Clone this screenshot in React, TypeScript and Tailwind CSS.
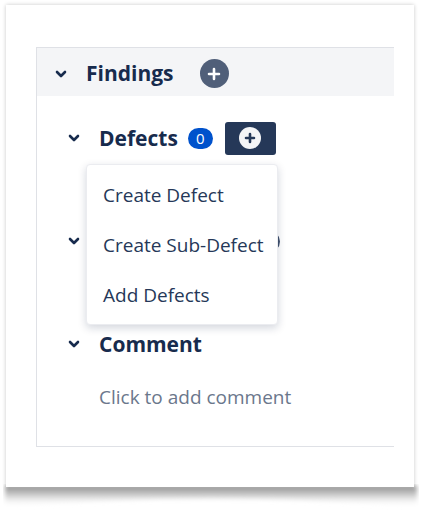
import type { ReactNode } from "react";

const font = { fontFamily: '"Open Sans", "Noto Sans", sans-serif' };

function Chevron() {
  return (
    <svg width="12" height="8" viewBox="0 0 12 8" className="shrink-0">
      <path d="M2 2l4 4 4-4" fill="none" stroke="#172b4d" strokeWidth="2.6" strokeLinecap="round" strokeLinejoin="round" />
    </svg>
  );
}

function Plus({ color, size }: { color: string; size: number }) {
  const a = size / 2;
  return (
    <svg width={size} height={size} viewBox={`0 0 ${size} ${size}`}>
      <path d={`M${a} ${a * 0.5}v${a}M${a * 0.5} ${a}h${a}`} stroke={color} strokeWidth="2.6" strokeLinecap="round" />
    </svg>
  );
}

function Row({ children, className = "" }: { children: ReactNode; className?: string }) {
  return <div className={`flex items-center h-[34px] pl-[31px] ${className}`}>{children}</div>;
}

export default function App() {
  return (
    <div className="w-[428px] h-[516px] bg-white relative overflow-hidden" style={font}>
      {/* page curl shadow */}
      <svg className="absolute left-[3px] top-[484px]" width="416" height="26" viewBox="0 0 416 26">
        <defs>
          <linearGradient id="curl" x1="0" y1="0" x2="0" y2="1">
            <stop offset="0" stopColor="#909090" />
            <stop offset="0.4" stopColor="#c8c8c8" />
            <stop offset="1" stopColor="#ffffff" stopOpacity="0" />
          </linearGradient>
          <filter id="blur">
            <feGaussianBlur stdDeviation="2" />
          </filter>
        </defs>
        <path d="M2 2H414V23Q208 6 2 23Z" fill="url(#curl)" filter="url(#blur)" />
      </svg>

      <div className="absolute left-[6px] top-[5px] w-[408px] h-[482px] bg-white shadow-[0_0_4px_rgba(0,0,0,0.22)] pl-[30px] pt-[42px]">
        <div className="relative w-[358px] h-[400px] border-l border-t border-b border-[#dfe1e6] bg-white">
          {/* Findings header */}
          <div className="flex items-center h-[48px] bg-[#f4f5f7] pl-[18px] pt-[3px]">
            <Chevron />
            <span className="ml-[19px] text-[21px] font-bold text-[#172b4d] leading-none">Findings</span>
            <span className="ml-[26px] flex items-center justify-center size-[29px] rounded-full bg-[#505f79]">
              <Plus color="#ffffff" size={20} />
            </span>
          </div>

          {/* Defects */}
          <Row className="mt-[25px]">
            <Chevron />
            <span className="ml-[19px] text-[21px] font-bold text-[#172b4d] leading-none">Defects</span>
            <span className="ml-[10px] flex items-center justify-center w-[25px] h-[21px] rounded-full bg-[#0052cc] text-white text-[15px] leading-none">0</span>
            <span className="ml-[12px] flex items-center justify-center w-[51px] h-[33px] rounded-[3px] bg-[#253858]">
              <span className="flex items-center justify-center size-[22px] rounded-full bg-[#f4f5f7]">
                <Plus color="#253858" size={16} />
              </span>
            </span>
          </Row>

          {/* row hidden behind the dropdown */}
          <Row className="mt-[69px]">
            <Chevron />
            <span className="ml-[175px] w-[25px] h-[21px] rounded-full border-2 border-[#42526e]" />
          </Row>

          {/* Comment */}
          <Row className="mt-[69px]">
            <Chevron />
            <span className="ml-[19px] text-[21px] font-bold text-[#172b4d] leading-none">Comment</span>
          </Row>
          <p className="mt-[24px] pl-[62px] text-[19px] leading-[24px] text-[#6b778c]">Click to add comment</p>

          {/* Dropdown menu */}
          <div className="absolute left-[49px] top-[116px] w-[192px] h-[161px] bg-white rounded-[4px] border border-[#ebecf0] shadow-[0_3px_8px_rgba(9,30,66,0.18)] py-[5px]">
            {["Create Defect", "Create Sub-Defect", "Add Defects"].map((item) => (
              <div key={item} className="flex items-center h-[50px] pl-[16px] whitespace-nowrap text-[19px] text-[#253858]">
                {item}
              </div>
            ))}
          </div>
        </div>
      </div>
    </div>
  );
}
